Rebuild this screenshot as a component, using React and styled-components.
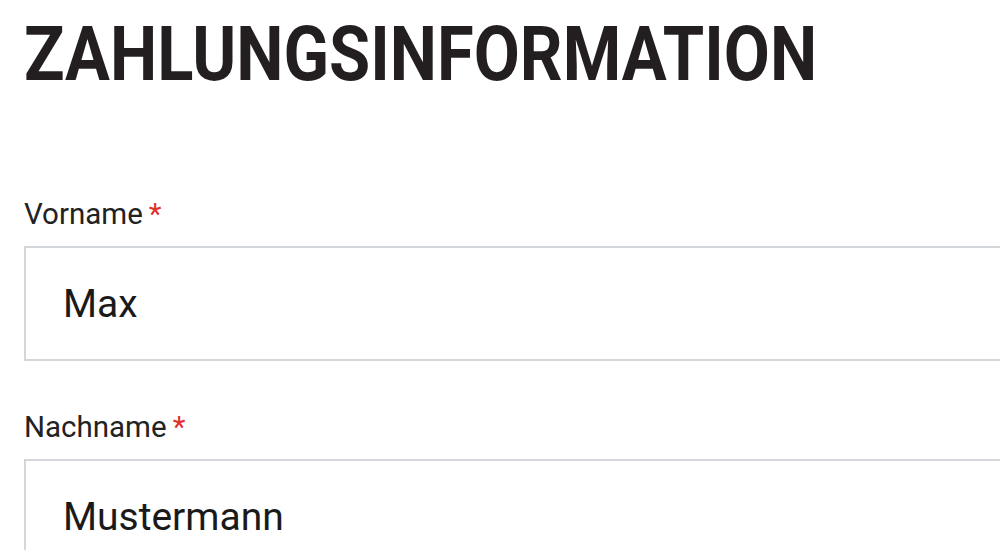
import React from 'react';
import styled, { createGlobalStyle } from 'styled-components';

const GlobalStyle = createGlobalStyle`
  html, body {
    margin: 0;
    padding: 0;
    background: #ffffff;
    overflow: hidden;
  }
  body {
    font-family: Roboto, "Liberation Sans", sans-serif;
  }
`;

const Page = styled.div`
  padding: 16px 0 0 24px;
  width: 1000px;
  box-sizing: border-box;
`;

const Heading = styled.h1`
  margin: 0 0 105px;
  font-size: 76px;
  line-height: 1;
  font-weight: 700;
  color: #231f20;
  transform: scaleX(0.88);
  transform-origin: left center;
  white-space: nowrap;
`;

const Form = styled.form`
  display: flex;
  flex-direction: column;
  gap: 49px;
`;

const Field = styled.div`
  display: flex;
  flex-direction: column;
  gap: 14px;
`;

const Label = styled.label`
  font-size: 29.5px;
  line-height: 35px;
  color: #222222;
`;

const Required = styled.span`
  color: #e0322a;
  margin-left: 6px;
`;

// the field runs on past the right edge of the shot, so no right border shows
const Input = styled.input`
  box-sizing: border-box;
  width: 100%;
  height: 115px;
  padding: 0 37px;
  border: 2px solid #d3d6da;
  border-right: none;
  border-radius: 0;
  font-family: Roboto, "Liberation Sans", sans-serif;
  font-size: 39px;
  color: #1a1a1a;
  background: #ffffff;
  outline: none;
`;

const fields = [
  { id: 'vorname', label: 'Vorname', value: 'Max' },
  { id: 'nachname', label: 'Nachname', value: 'Mustermann' },
];

function App() {
  return (
    <>
      <GlobalStyle />
      <Page>
        <Heading>ZAHLUNGSINFORMATION</Heading>
        <Form>
          {fields.map((f) => (
            <Field key={f.id}>
              <Label htmlFor={f.id}>
                {f.label}
                <Required>*</Required>
              </Label>
              <Input id={f.id} defaultValue={f.value} readOnly />
            </Field>
          ))}
        </Form>
      </Page>
    </>
  );
}

export default App;
